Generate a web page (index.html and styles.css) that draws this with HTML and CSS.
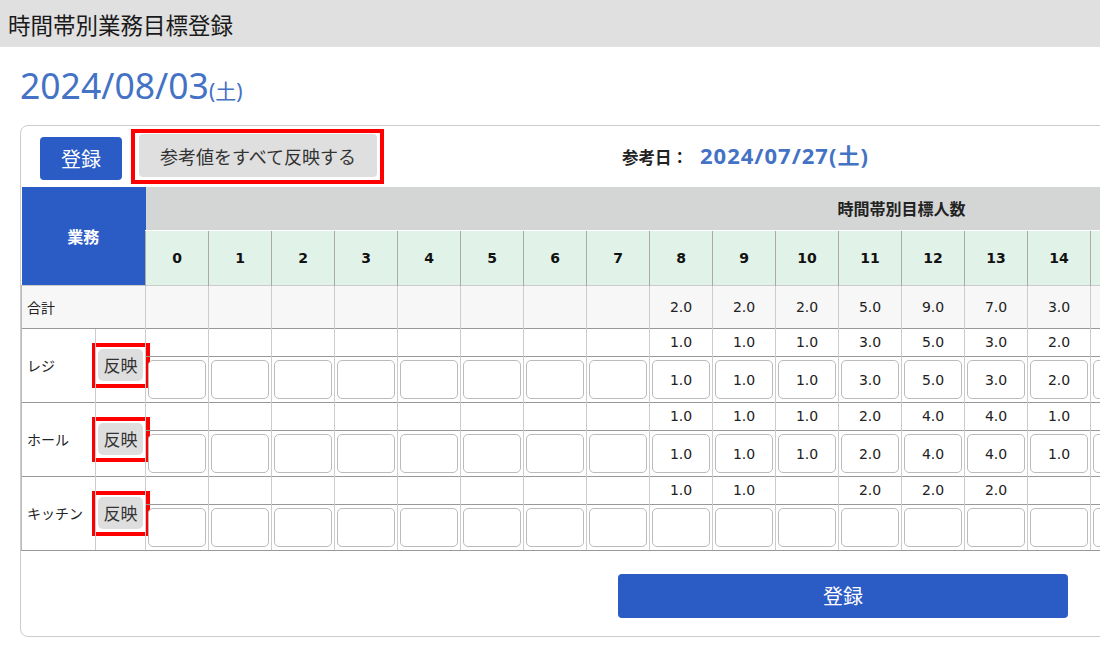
FILE: index.html
```html
<!DOCTYPE html>
<html lang="ja">
<head>
<meta charset="utf-8">
<title>時間帯別業務目標登録</title>
<link rel="stylesheet" href="styles.css">
</head>
<body>
<header class="page-header">時間帯別業務目標登録</header>
<main class="page-body">
  <div class="date">2024/08/03<span class="dow">(土)</span></div>
  <section class="card">
    <div class="toolbar">
      <button class="btn btn-primary">登録</button>
      <span class="hl hl-top"><button class="btn btn-gray">参考値をすべて反映する</button></span>
      <div class="ref-date">参考日：<span class="val">2024/07/27(土)</span></div>
    </div>
    <table class="grid">
      <colgroup>
        <col class="c-name"><col class="c-act">
        <col class="c-h"><col class="c-h"><col class="c-h"><col class="c-h"><col class="c-h"><col class="c-h"><col class="c-h"><col class="c-h">
        <col class="c-h"><col class="c-h"><col class="c-h"><col class="c-h"><col class="c-h"><col class="c-h"><col class="c-h"><col class="c-h">
        <col class="c-h"><col class="c-h"><col class="c-h"><col class="c-h"><col class="c-h"><col class="c-h"><col class="c-h"><col class="c-h">
      </colgroup>
      <thead>
        <tr class="head-top">
          <th class="biz" colspan="2" rowspan="2">業務</th>
          <th class="span" colspan="24">時間帯別目標人数</th>
        </tr>
        <tr class="head-hours">
          <th>0</th><th>1</th><th>2</th><th>3</th><th>4</th><th>5</th><th>6</th><th>7</th><th>8</th><th>9</th><th>10</th><th>11</th><th>12</th><th>13</th><th>14</th><th>15</th><th>16</th><th>17</th><th>18</th><th>19</th><th>20</th><th>21</th><th>22</th><th>23</th>
        </tr>
      </thead>
      <tbody>
        <tr class="sum">
          <td class="name" colspan="2">合計</td>
          <td></td><td></td><td></td><td></td><td></td><td></td><td></td><td></td>
          <td>2.0</td><td>2.0</td><td>2.0</td><td>5.0</td><td>9.0</td><td>7.0</td><td>3.0</td>
          <td></td><td></td><td></td><td></td><td></td><td></td><td></td><td></td><td></td>
        </tr>

        <tr class="ref">
          <td class="name" rowspan="2">レジ</td>
          <td class="act" rowspan="2"><span class="hl hl-sm"><button class="btn-reflect">反映</button></span></td>
          <td></td><td></td><td></td><td></td><td></td><td></td><td></td><td></td>
          <td>1.0</td><td>1.0</td><td>1.0</td><td>3.0</td><td>5.0</td><td>3.0</td><td>2.0</td>
          <td></td><td></td><td></td><td></td><td></td><td></td><td></td><td></td><td></td>
        </tr>
        <tr class="inp">
          <td><input class="cell-input"></td><td><input class="cell-input"></td><td><input class="cell-input"></td><td><input class="cell-input"></td><td><input class="cell-input"></td><td><input class="cell-input"></td><td><input class="cell-input"></td><td><input class="cell-input"></td>
          <td><input class="cell-input" value="1.0"></td><td><input class="cell-input" value="1.0"></td><td><input class="cell-input" value="1.0"></td><td><input class="cell-input" value="3.0"></td><td><input class="cell-input" value="5.0"></td><td><input class="cell-input" value="3.0"></td><td><input class="cell-input" value="2.0"></td>
          <td><input class="cell-input"></td><td><input class="cell-input"></td><td><input class="cell-input"></td><td><input class="cell-input"></td><td><input class="cell-input"></td><td><input class="cell-input"></td><td><input class="cell-input"></td><td><input class="cell-input"></td><td><input class="cell-input"></td>
        </tr>

        <tr class="ref">
          <td class="name" rowspan="2">ホール</td>
          <td class="act" rowspan="2"><span class="hl hl-sm"><button class="btn-reflect">反映</button></span></td>
          <td></td><td></td><td></td><td></td><td></td><td></td><td></td><td></td>
          <td>1.0</td><td>1.0</td><td>1.0</td><td>2.0</td><td>4.0</td><td>4.0</td><td>1.0</td>
          <td></td><td></td><td></td><td></td><td></td><td></td><td></td><td></td><td></td>
        </tr>
        <tr class="inp">
          <td><input class="cell-input"></td><td><input class="cell-input"></td><td><input class="cell-input"></td><td><input class="cell-input"></td><td><input class="cell-input"></td><td><input class="cell-input"></td><td><input class="cell-input"></td><td><input class="cell-input"></td>
          <td><input class="cell-input" value="1.0"></td><td><input class="cell-input" value="1.0"></td><td><input class="cell-input" value="1.0"></td><td><input class="cell-input" value="2.0"></td><td><input class="cell-input" value="4.0"></td><td><input class="cell-input" value="4.0"></td><td><input class="cell-input" value="1.0"></td>
          <td><input class="cell-input"></td><td><input class="cell-input"></td><td><input class="cell-input"></td><td><input class="cell-input"></td><td><input class="cell-input"></td><td><input class="cell-input"></td><td><input class="cell-input"></td><td><input class="cell-input"></td><td><input class="cell-input"></td>
        </tr>

        <tr class="ref last-group">
          <td class="name" rowspan="2">キッチン</td>
          <td class="act" rowspan="2"><span class="hl hl-sm"><button class="btn-reflect">反映</button></span></td>
          <td></td><td></td><td></td><td></td><td></td><td></td><td></td><td></td>
          <td>1.0</td><td>1.0</td><td></td><td>2.0</td><td>2.0</td><td>2.0</td><td></td>
          <td></td><td></td><td></td><td></td><td></td><td></td><td></td><td></td><td></td>
        </tr>
        <tr class="inp last">
          <td><input class="cell-input"></td><td><input class="cell-input"></td><td><input class="cell-input"></td><td><input class="cell-input"></td><td><input class="cell-input"></td><td><input class="cell-input"></td><td><input class="cell-input"></td><td><input class="cell-input"></td>
          <td><input class="cell-input"></td><td><input class="cell-input"></td><td><input class="cell-input"></td><td><input class="cell-input"></td><td><input class="cell-input"></td><td><input class="cell-input"></td><td><input class="cell-input"></td>
          <td><input class="cell-input"></td><td><input class="cell-input"></td><td><input class="cell-input"></td><td><input class="cell-input"></td><td><input class="cell-input"></td><td><input class="cell-input"></td><td><input class="cell-input"></td><td><input class="cell-input"></td><td><input class="cell-input"></td>
        </tr>
      </tbody>
    </table>
    <div class="card-footer">
      <button class="btn btn-submit">登録</button>
    </div>
  </section>
</main>
</body>
</html>
```

FILE: styles.css
```css
* { box-sizing: border-box; }

html, body {
  margin: 0;
  padding: 0;
  overflow: hidden;
}

body {
  width: 1100px;
  height: 652px;
  background: #fff;
  color: #222;
  font-family: "Noto Sans", "Noto Sans CJK JP", sans-serif;
}

.page-header {
  height: 47px;
  background: #e0e0e0;
  padding: 2px 0 0 8px;
  font-family: "Noto Sans CJK JP", sans-serif;
  font-size: 22.5px;
  line-height: 45px;
  color: #1a1a1a;
}

.page-body {
  padding-left: 20px;
}

.date {
  height: 78px;
  padding-top: 17px;
  color: #4472c4;
  font-family: "Noto Sans", "Noto Sans CJK JP", sans-serif;
  font-size: 35.5px;
  line-height: 42px;
}

.date .dow {
  font-size: 21px;
}

.card {
  width: 1646px;
  border: 1px solid #ccc;
  border-radius: 8px;
  background: #fff;
}

.toolbar {
  height: 61px;
  display: flex;
  align-items: center;
  padding-left: 19px;
}

.btn {
  border: none;
  border-radius: 4px;
  font-family: "Noto Sans CJK JP", sans-serif;
  cursor: pointer;
  padding: 0;
}

.btn-primary {
  width: 82px;
  height: 43px;
  margin-top: 4px;
  background: #2b5cc6;
  color: #fff;
  font-size: 20px;
}

/* red highlight frames (annotation) */
.hl {
  display: flex;
  border: 4px solid #ff0000;
}

.hl-top {
  margin-left: 9px;
  padding: 1px 3px 3px 4px;
}

.hl-sm {
  width: 58px;
  margin-left: -4px;
  padding: 2px 3px 3px 2px;
}

.btn-gray {
  width: 238px;
  height: 43px;
  background: #dfdfdf;
  color: #333;
  font-size: 18px;
}

.ref-date {
  margin-left: 238px;
  margin-bottom: 6px;
  font-family: "Noto Sans CJK JP", sans-serif;
  font-size: 16.5px;
  font-weight: bold;
  color: #222;
}

.ref-date .val {
  margin-left: 12px;
  font-family: "Noto Sans", "Noto Sans CJK JP", sans-serif;
  font-size: 22px;
  letter-spacing: 1px;
  color: #4472c4;
}

/* table */
.grid {
  border-collapse: collapse;
  table-layout: fixed;
  width: 1636px;
  font-family: "DejaVu Sans", "Noto Sans CJK JP", sans-serif;
  font-size: 14px;
  color: #222;
}

.c-name { width: 74px; }
.c-act { width: 50px; }
.c-h { width: 63px; }

.grid th, .grid td {
  padding: 0;
}

.head-top th {
  height: 43px;
}

.head-top .biz {
  background: #2b5cc6;
  color: #fff;
  font-family: "Noto Sans CJK JP", sans-serif;
  font-size: 16px;
  font-weight: bold;
}

.head-top .span {
  background: #d4d5d5;
  color: #222;
  font-family: "Noto Sans CJK JP", sans-serif;
  font-size: 16px;
  font-weight: bold;
  border-bottom: 1px solid #fff;
}

.head-hours th {
  height: 55px;
  background: #e1f2e8;
  border-left: 1px solid #aaa;
  font-size: 14px;
  font-weight: bold;
  color: #111;
}

.grid tbody td {
  border-left: 1px solid #ccc;
  text-align: center;
  vertical-align: middle;
}

.grid tbody td.name {
  border-left: 1px solid #bbb;
  text-align: left;
  padding-left: 5px;
  font-family: "Noto Sans CJK JP", sans-serif;
  font-size: 14px;
}

.sum td {
  height: 43px;
  background: #f7f7f7;
  border-top: 1px solid #ccc;
}

.ref td {
  height: 28px;
  border-top: 1px solid #999;
}

.inp td {
  height: 46px;
  border-top: 1px solid #999;
  padding: 1px 2px 0 2px;
  vertical-align: top;
}

.last td,
.last-group td.name,
.last-group td.act {
  border-bottom: 1px solid #999;
}

.btn-reflect {
  width: 45px;
  height: 32px;
  border: none;
  border-radius: 5px;
  background: #dedede;
  color: #333;
  font-family: "Noto Sans CJK JP", sans-serif;
  font-size: 17px;
  padding: 0;
  cursor: pointer;
}

.cell-input {
  display: block;
  width: 100%;
  height: 39px;
  margin: 0;
  border: 1px solid #bbb;
  border-radius: 5px;
  background: #fff;
  text-align: center;
  font-family: "DejaVu Sans", sans-serif;
  font-size: 14px;
  color: #222;
  padding: 0;
}

.card-footer {
  padding: 23px 0 18px 0;
  display: flex;
  justify-content: center;
}

.btn-submit {
  width: 450px;
  height: 44px;
  background: #2b5cc6;
  color: #fff;
  font-size: 20px;
}
```
